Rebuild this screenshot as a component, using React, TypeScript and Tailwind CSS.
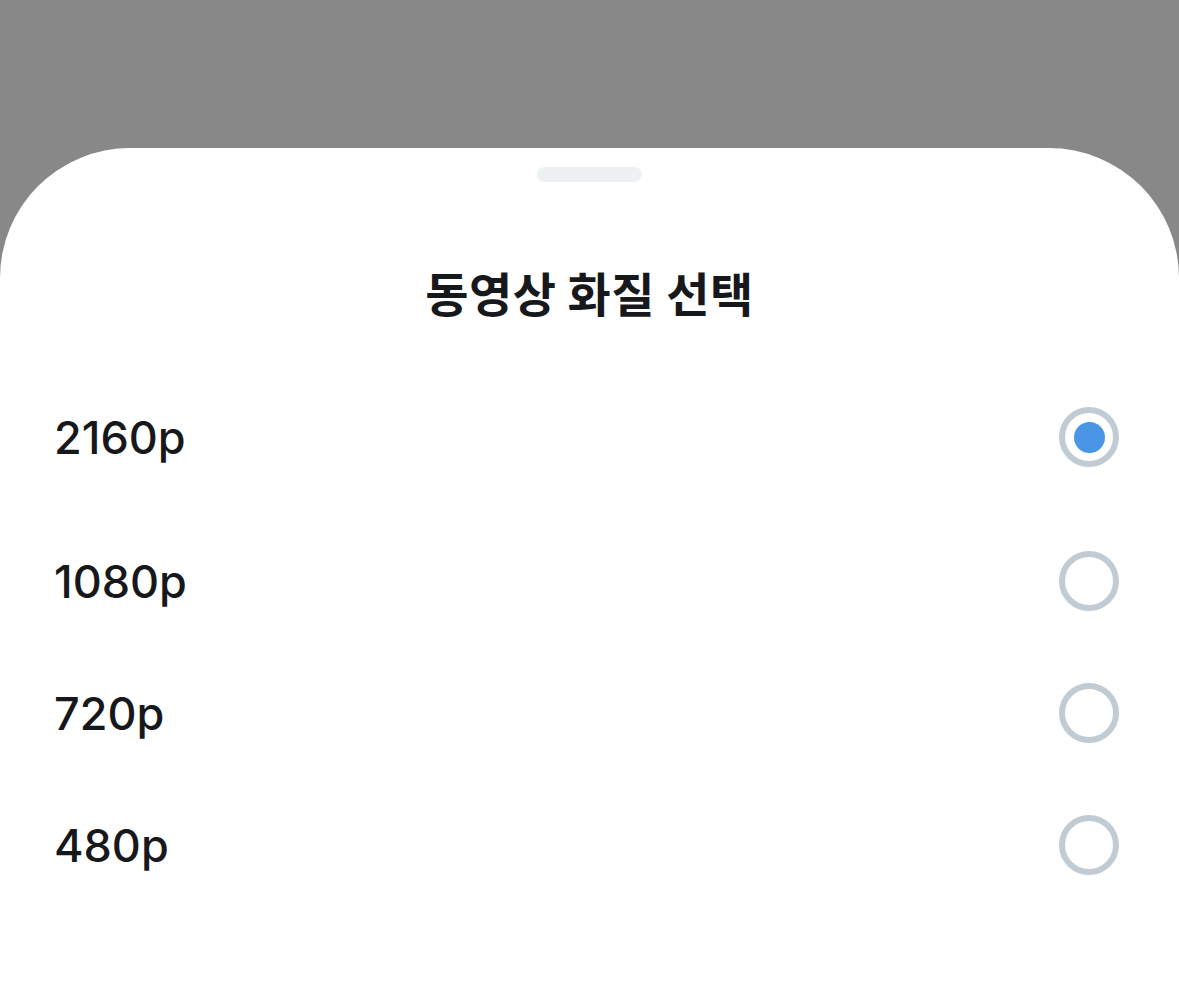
import React from "react";

const options = [
  { label: "2160p", selected: true },
  { label: "1080p", selected: false },
  { label: "720p", selected: false },
  { label: "480p", selected: false },
];

export default function App() {
  return (
    <div className="w-[1179px] h-[989px] bg-[#888888] flex flex-col overflow-hidden">
      <div className="h-[148px] shrink-0" />
      <div className="flex-1 bg-white rounded-t-[130px] flex flex-col items-center pt-[19px]">
        <div className="w-[105px] h-[15px] rounded-full bg-[#eef1f2]" />
        <h1
          className="mt-[82px] h-[56px] leading-[56px] text-[47px] font-bold text-[#17181b] tracking-[0.5px]"
          style={{ fontFamily: '"Noto Sans CJK KR", "Noto Sans", sans-serif' }}
        >
          동영상 화질 선택
        </h1>
        <div className="mt-[51px] w-full flex flex-col">
          {options.map((o, i) => (
            <div
              key={o.label}
              className={`h-[132px] flex items-center justify-between pl-[54px] pr-[60px] ${i === 0 ? "mb-[12px]" : ""}`}
            >
              <span
                className="text-[45px] font-medium text-[#17181b] leading-none"
                style={{ fontFamily: 'Inter, "Liberation Sans", sans-serif' }}
              >
                {o.label}
              </span>
              <div className="w-[60px] h-[60px] rounded-full border-[6px] border-[#c0cbd4] flex items-center justify-center">
                {o.selected && <div className="w-[31px] h-[31px] rounded-full bg-[#4a95e5]" />}
              </div>
            </div>
          ))}
        </div>
      </div>
    </div>
  );
}
